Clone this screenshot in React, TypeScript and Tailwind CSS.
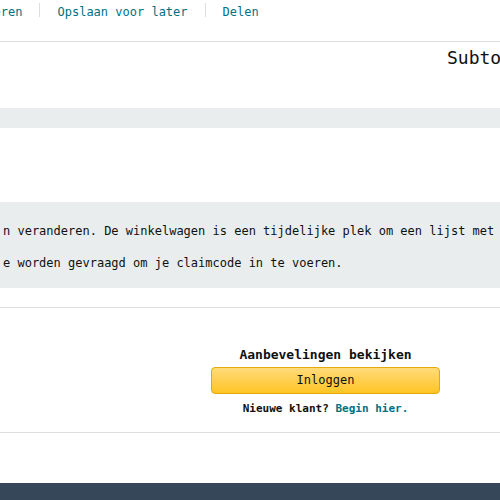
export default function App() {
  return (
    <div className="w-[500px] h-[500px] overflow-hidden bg-white text-[#0f1111] font-['DejaVu_Sans_Mono',monospace]">
      {/* actions row */}
      <div className="h-[42px] border-b border-[#dddddd] overflow-hidden">
        <div className="flex items-start ml-[-57px] whitespace-nowrap text-[12px] leading-[24px] text-[#007185]">
          <a className="shrink-0">Verwijderen</a>
          <span className="shrink-0 mx-[17px] mt-[3px] w-px h-[14px] bg-[#dddddd]" />
          <a className="shrink-0">Opslaan voor later</a>
          <span className="shrink-0 mx-[17px] mt-[3px] w-px h-[14px] bg-[#dddddd]" />
          <a className="shrink-0">Delen</a>
        </div>
      </div>

      {/* subtotal */}
      <div className="flex h-[66px] overflow-hidden">
        <div className="w-[447px] shrink-0" />
        <div className="shrink-0 pt-[5px] text-[18px] leading-[22px] whitespace-nowrap">
          Subtotaal (1 artikel): €24,99
        </div>
      </div>

      <div className="h-[20px] bg-[#e9eded]" />

      <div className="h-[74px]" />

      {/* disclaimer */}
      <div className="h-[86px] bg-[#e9eded] overflow-hidden pl-[3px] pt-[13px] text-[12px] leading-[32px] whitespace-nowrap">
        <p>n veranderen. De winkelwagen is een tijdelijke plek om een lijst met items op te slaan.</p>
        <p>e worden gevraagd om je claimcode in te voeren.</p>
      </div>

      <div className="h-[20px] border-b border-[#dddddd]" />

      {/* recommendations / login */}
      <div className="flex border-b border-[#dddddd] pt-[39px] pb-[16px]">
        <div className="flex-1" />
        <div className="w-[229px] flex flex-col items-center">
          <h3 className="text-[13px] leading-[16px] font-bold">Aanbevelingen bekijken</h3>
          <button className="mt-[4px] w-full h-[27px] rounded-[4px] border border-[#e3a90d] bg-gradient-to-b from-[#ffdb7a] via-[#ffcf4d] to-[#ffc422] text-[12px] leading-[25px] text-[#0f1111]">
            Inloggen
          </button>
          <p className="mt-[8px] text-[11px] leading-[14px] font-bold whitespace-nowrap">
            Nieuwe klant? <a className="text-[#007185]">Begin hier.</a>
          </p>
        </div>
        <div className="w-[60px] shrink-0" />
      </div>

      <div className="h-[50px]" />

      <footer className="h-[40px] bg-[#37475a]" />
    </div>
  );
}
